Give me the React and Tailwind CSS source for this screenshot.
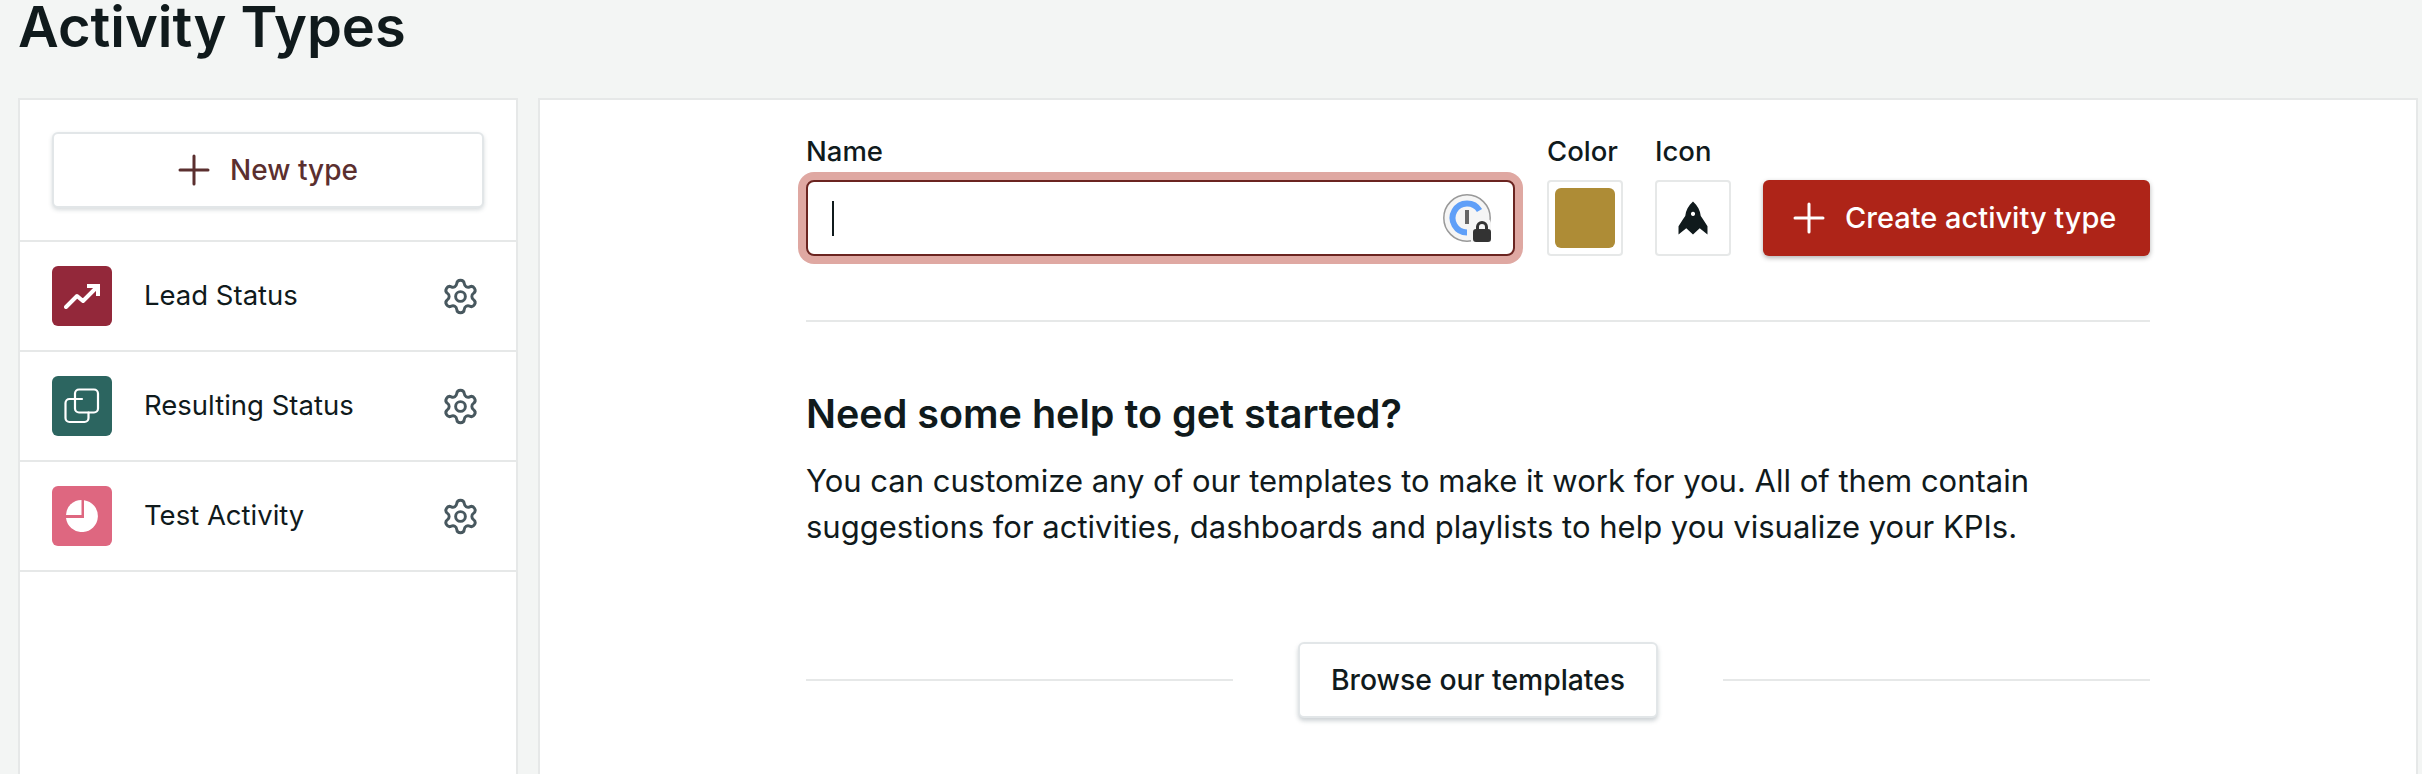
import { Settings } from 'lucide-react'

const activityTypes = [
  { name: 'Lead Status', color: 'bg-[#93283a]', icon: 'trend' },
  { name: 'Resulting Status', color: 'bg-[#2c6560]', icon: 'copy' },
  { name: 'Test Activity', color: 'bg-[#de6780]', icon: 'pie' },
]

function PlusIcon({ className }) {
  return (
    <svg viewBox="0 0 32 32" className={className} fill="none" stroke="currentColor" strokeWidth="3" strokeLinecap="round">
      <path d="M16 2v28M2 16h28" />
    </svg>
  )
}

function TypeIcon({ type }) {
  if (type === 'trend') {
    return (
      <svg viewBox="0 0 36 26" className="w-[36px] h-[26px]" fill="none" stroke="white" strokeWidth="4" strokeLinecap="round" strokeLinejoin="round">
        <path d="M2 24 L13 13 L19 18 L33 4" />
        <path d="M23 3 H34 V13" strokeLinecap="butt" strokeLinejoin="miter" />
      </svg>
    )
  }
  if (type === 'copy') {
    return (
      <svg viewBox="0 0 36 36" className="w-[36px] h-[36px]" fill="none" stroke="white" strokeWidth="2.2" strokeLinecap="round">
        <rect x="11" y="1.5" width="23" height="23" rx="4" />
        <path d="M18 11 H5.5 a4 4 0 0 0 -4 4 V30 a4 4 0 0 0 4 4 H20.5 a4 4 0 0 0 4 -4 V24.5" />
      </svg>
    )
  }
  return (
    <svg viewBox="0 0 32 32" className="w-[32px] h-[32px]" fill="white">
      <path d="M15.5 0 V15 H0 A15.5 15.5 0 0 1 15.5 0Z" />
      <path d="M18 0.2 A16 16 0 1 1 0 18 H18Z" />
    </svg>
  )
}

function RocketIcon() {
  return (
    <svg viewBox="0 0 29 32" className="w-[30px] h-[34px]" fill="#101a1c">
      <path fillRule="evenodd" d="M14.5 0 C19 4 21.5 9 22 14 L24 17 L28.5 24 V32 L21 26 L14.5 32 L8 26 L0.5 32 V24 L5 17 L7 14 C7.5 9 10 4 14.5 0Z M14.5 10 a2 2 0 1 0 0.01 0Z" />
    </svg>
  )
}

function PasswordBadge() {
  return (
    <svg viewBox="0 0 48 48" className="w-[48px] h-[48px] shrink-0">
      <circle cx="24" cy="24" r="23.2" fill="#f5f5f5" stroke="#999999" strokeWidth="1.5" />
      <path d="M36.5 16.5 A14.5 14.5 0 1 0 24 38.5" fill="none" stroke="#5f9ff8" strokeWidth="6" />
      <rect x="22" y="16" width="4" height="14" fill="#666666" />
      <path d="M28 48 V33 a10 9 0 0 1 20 -4 V48Z" fill="#f5f5f5" />
      <path fillRule="evenodd" d="M33 35 v-2 a6 6 0 0 1 12 0 v2 a3 3 0 0 1 3 3 v7 a3 3 0 0 1 -3 3 h-12 a3 3 0 0 1 -3 -3 v-7 a3 3 0 0 1 3 -3Z M36 35 h6 v-2 a3 3 0 0 0 -6 0Z" fill="#333333" />
    </svg>
  )
}

function FieldLabel({ children }) {
  return <label className="block text-[27.5px] font-medium leading-[32px] mb-[13px] -mt-[1px]">{children}</label>
}

export default function App() {
  return (
    <div className="h-screen overflow-hidden bg-[#f3f5f4] font-['Inter',sans-serif] text-[#101a1c]">
      <h1 className="pl-[18px] h-[98px] text-[56px] leading-[54px] font-semibold">Activity Types</h1>

      <div className="flex gap-[20px] pl-[18px] pr-[4px]">
        <aside className="w-[500px] h-[700px] shrink-0 bg-white border-2 border-[#e6e8e8]">
          <div className="h-[142px] border-b-2 border-[#e6e8e8] pt-[32px] px-[32px]">
            <button className="w-full h-[76px] flex items-center justify-center gap-[20px] rounded-[6px] bg-white border-2 border-[#e2e6e8] shadow-[0_2px_4px_rgba(60,80,90,0.2)] text-[#5b2f2f] text-[28px] font-medium whitespace-nowrap">
              <PlusIcon className="w-[32px] h-[32px]" />
              New type
            </button>
          </div>
          {activityTypes.map((type) => (
            <div key={type.name} className="h-[110px] border-b-2 border-[#e6e8e8] flex items-center pl-[32px] pr-[36px]">
              <div className={`w-[60px] h-[60px] rounded-[6px] flex items-center justify-center ${type.color}`}>
                <TypeIcon type={type.icon} />
              </div>
              <span className="ml-[32px] flex-1 text-[27.5px]">{type.name}</span>
              <Settings className="w-[39px] h-[39px] text-[#48585f]" strokeWidth={1.8} />
            </div>
          ))}
        </aside>

        <main className="flex-1 h-[700px] bg-white border-2 border-[#e6e8e8] pl-[266px] pt-[36px]">
          <div className="w-[1344px]">
            <div className="flex items-end gap-[32px]">
              <div className="flex-1">
                <FieldLabel>Name</FieldLabel>
                <div className="h-[76px] rounded-[8px] border-2 border-[#6b2420] ring-8 ring-[#dfa8a2] bg-white flex items-center justify-between pl-[24px] pr-[22px]">
                  <span className="w-[2px] h-[35px] bg-[#101a1c]"></span>
                  <PasswordBadge />
                </div>
              </div>
              <div>
                <FieldLabel>Color</FieldLabel>
                <div className="w-[76px] h-[76px] rounded-[4px] border-2 border-[#e6e8e8] flex items-center justify-center">
                  <div className="w-[60px] h-[60px] rounded-[6px] bg-[#ae8c36]"></div>
                </div>
              </div>
              <div>
                <FieldLabel>Icon</FieldLabel>
                <div className="w-[76px] h-[76px] rounded-[4px] border-2 border-[#e6e8e8] flex items-center justify-center">
                  <RocketIcon />
                </div>
              </div>
              <button className="w-[387px] h-[76px] rounded-[6px] bg-[#ae2418] shadow-[0_2px_5px_rgba(0,0,0,0.3)] text-white flex items-center pl-[30px] gap-[20px] text-[29px] font-medium whitespace-nowrap">
                <PlusIcon className="w-[32px] h-[32px]" />
                Create activity type
              </button>
            </div>

            <div className="mt-[64px] h-[2px] bg-[#e6e8e8]"></div>

            <h2 className="mt-[69px] text-[39.5px] leading-[46px] font-semibold">Need some help to get started?</h2>
            <p className="mt-[21px] text-[31px] leading-[46px]">
              You can customize any of our templates to make it work for you. All of them contain
              <br />
              suggestions for activities, dashboards and playlists to help you visualize your KPIs.
            </p>

            <div className="mt-[92px] flex items-center gap-[65px]">
              <div className="flex-1 h-[2px] bg-[#e6e8e8]"></div>
              <button className="w-[360px] h-[76px] rounded-[6px] bg-white border-2 border-[#e2e6e8] shadow-[0_3px_4px_rgba(60,80,90,0.25)] text-[28.3px] font-medium whitespace-nowrap">
                Browse our templates
              </button>
              <div className="flex-1 h-[2px] bg-[#e6e8e8]"></div>
            </div>
          </div>
        </main>
      </div>
    </div>
  )
}
